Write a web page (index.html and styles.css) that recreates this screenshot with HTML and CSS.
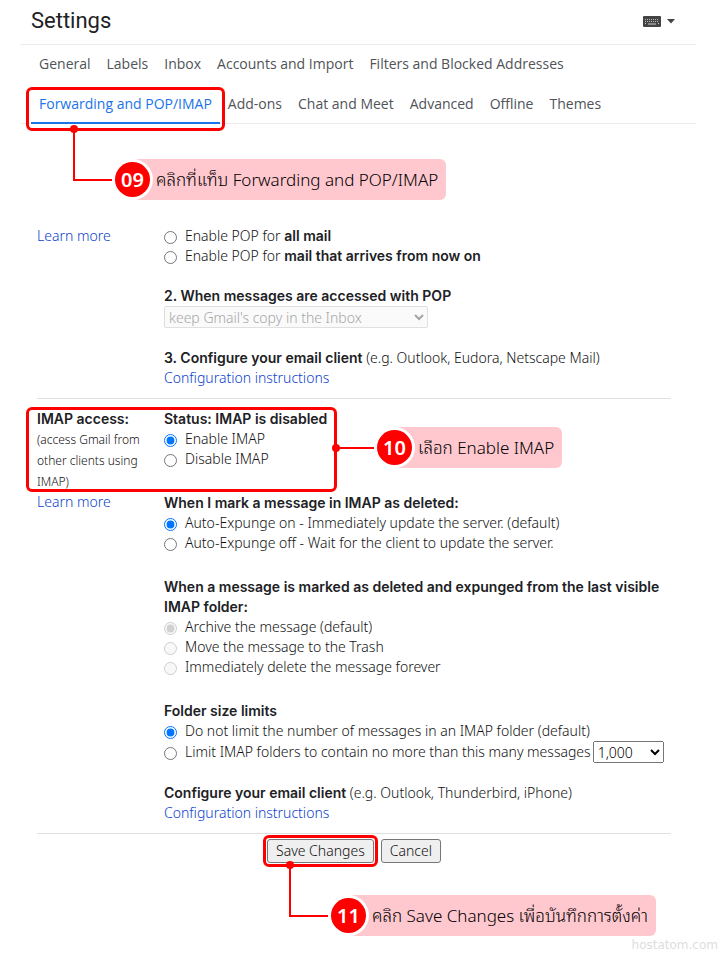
FILE: index.html
```html
<!DOCTYPE html>
<html lang="en">
<head>
    <meta charset="UTF-8">
    <meta name="viewport" content="width=device-width, initial-scale=1.0">
    <title>Settings</title>
    <link rel="stylesheet" href="styles.css">
</head>
<body>

    <header class="header">
        <h1>Settings</h1>
        <button class="input-tools" type="button" aria-label="Input tools">
            <svg width="18" height="11" viewBox="0 0 18 11">
                <rect width="18" height="11" rx="1" fill="#444"/>
                <path d="M2 3.5h14M2 5.5h14" stroke="#bbb" stroke-width="1" stroke-dasharray="1 1"/>
                <path d="M2 7.5h1M5 8h8M15 7.5h1" stroke="#ccc" stroke-width="1"/>
            </svg>
            <svg width="8" height="5" viewBox="0 0 8 5">
                <path d="M0 0h8L4 4.5z" fill="#444"/>
            </svg>
        </button>
    </header>

    <!-- Tabs -->
    <nav class="tabs">
        <a href="#">General</a>
        <a href="#">Labels</a>
        <a href="#">Inbox</a>
        <a href="#">Accounts and Import</a>
        <a href="#">Filters and Blocked Addresses</a>
        <div class="marked">
            <a href="#" class="active">Forwarding and POP/IMAP</a>
            <div class="highlight highlight-tab"></div>
            <div class="callout callout-tab" lang="th">
                <span class="connector elbow"></span>
                <span class="badge">09</span>
                <span class="note">คลิกที่แท็บ Forwarding and POP/IMAP</span>
            </div>
        </div>
        <a href="#">Add-ons</a>
        <a href="#">Chat and Meet</a>
        <a href="#">Advanced</a>
        <a href="#">Offline</a>
        <a href="#">Themes</a>
    </nav>

    <form class="settings">
        <!-- POP -->
        <section class="row">
            <div class="side">
                <a href="#">Learn more</a>
            </div>
            <div class="main">
                <div class="group">
                    <label class="option"><input type="radio" name="pop"><span>Enable POP for <b>all mail</b></span></label>
                    <label class="option"><input type="radio" name="pop"><span>Enable POP for <b>mail that arrives from now on</b></span></label>
                </div>
                <div class="group">
                    <label for="popAction"><b>2. When messages are accessed with POP</b></label>
                    <select id="popAction" class="pop-action" disabled>
                        <option>keep Gmail's copy in the Inbox</option>
                    </select>
                </div>
                <div class="group">
                    <p><b>3. Configure your email client</b> (e.g. Outlook, Eudora, Netscape Mail)</p>
                    <a href="#">Configuration instructions</a>
                </div>
            </div>
        </section>

        <!-- IMAP -->
        <section class="row">
            <div class="side">
                <h2>IMAP access:</h2>
                <p class="hint">(access Gmail from other clients using IMAP)</p>
                <a href="#">Learn more</a>
            </div>
            <div class="main imap">
                <div class="group">
                    <h2>Status: IMAP is disabled</h2>
                    <label class="option"><input type="radio" name="imap" checked><span>Enable IMAP</span></label>
                    <label class="option"><input type="radio" name="imap"><span>Disable IMAP</span></label>
                </div>
                <div class="group">
                    <h2>When I mark a message in IMAP as deleted:</h2>
                    <label class="option"><input type="radio" name="expunge" checked><span>Auto-Expunge on - Immediately update the server. (default)</span></label>
                    <label class="option"><input type="radio" name="expunge"><span>Auto-Expunge off - Wait for the client to update the server.</span></label>
                </div>
                <div class="group">
                    <h2>When a message is marked as deleted and expunged from the last visible IMAP folder:</h2>
                    <label class="option"><input type="radio" name="deleted" checked disabled><span>Archive the message (default)</span></label>
                    <label class="option"><input type="radio" name="deleted" disabled><span>Move the message to the Trash</span></label>
                    <label class="option"><input type="radio" name="deleted" disabled><span>Immediately delete the message forever</span></label>
                </div>
                <div class="group limits">
                    <h2>Folder size limits</h2>
                    <label class="option"><input type="radio" name="limit" checked><span>Do not limit the number of messages in an IMAP folder (default)</span></label>
                    <div class="limit-line">
                        <label class="option"><input type="radio" name="limit"><span>Limit IMAP folders to contain no more than this many messages</span></label>
                        <select class="limit-count" aria-label="Message limit">
                            <option>1,000</option>
                        </select>
                    </div>
                </div>
                <div class="group">
                    <p><b>Configure your email client</b> (e.g. Outlook, Thunderbird, iPhone)</p>
                    <a href="#">Configuration instructions</a>
                </div>
            </div>
            <div class="highlight highlight-imap"></div>
            <div class="callout callout-imap" lang="th">
                <span class="connector"></span>
                <span class="badge">10</span>
                <span class="note">เลือก Enable IMAP</span>
            </div>
        </section>

        <!-- Buttons -->
        <div class="actions">
            <div class="marked">
                <button type="button">Save Changes</button>
                <div class="highlight highlight-save"></div>
                <div class="callout callout-save" lang="th">
                    <span class="connector elbow"></span>
                    <span class="badge">11</span>
                    <span class="note">คลิก Save Changes เพื่อบันทึกการตั้งค่า</span>
                </div>
            </div>
            <button type="button">Cancel</button>
        </div>
    </form>

    <footer class="watermark">hostatom.com</footer>

</body>
</html>
```

FILE: styles.css
```css
* {
    box-sizing: border-box;
}
body {
    margin: 0;
    background: #fff;
    color: #111;
    font-family: "Noto Sans", sans-serif;
    font-size: 14px;
    font-weight: 300;
    line-height: 20px;
}
h1, h2, p {
    margin: 0;
}
h2 {
    font-size: 14px;
}
h2, b {
    color: #202124;
    font-family: Inter, sans-serif;
    font-weight: 600;
}
a {
    color: #0b41cd;
    text-decoration: none;
}
.header {
    display: flex;
    justify-content: space-between;
    height: 45px;
    margin: 0 24px 0 20px;
    padding: 0 21px 0 11px;
    border-bottom: 1px solid #ebebeb;
}
h1 {
    color: #202124;
    font-family: Roboto, sans-serif;
    font-size: 22px;
    font-weight: 400;
    line-height: 41px;
}
.input-tools {
    display: flex;
    align-items: center;
    gap: 6px;
    height: 43px;
    padding: 0;
    border: none;
    background: none;
}
.tabs {
    display: flex;
    flex-wrap: wrap;
    row-gap: 2px;
    margin: 0 24px 0 20px;
    padding-left: 11px;
    border-bottom: 1px solid #ebebeb;
}
.tabs a {
    display: block;
    height: 38px;
    padding: 0 8px;
    color: #505357;
    font-family: "Open Sans", sans-serif;
    font-weight: 500;
    line-height: 38px;
}
.tabs .active {
    height: 39px;
    margin-bottom: -1px;
    color: #1a73e8;
    border-bottom: 2px solid #1a73e8;
}
.marked {
    position: relative;
}

/* Settings rows */
.settings {
    margin: 0 49px 0 37px;
    padding-top: 92px;
}
.row {
    position: relative;
    display: grid;
    grid-template-columns: 127px 1fr;
    padding: 10px 0;
    border-bottom: 1px solid #e0e0e0;
}
.side {
    padding-right: 16px;
}
.hint {
    font-size: 12px;
    line-height: 21px;
}
.main {
    display: flex;
    flex-direction: column;
    gap: 20px;
}
.imap {
    gap: 24px;
}
.imap .limits {
    margin-bottom: -4px;
}
.group {
    display: flex;
    flex-direction: column;
    align-items: flex-start;
}
.option {
    display: flex;
    align-items: flex-start;
    gap: 8px;
}
.option input {
    flex: none;
    width: 13px;
    height: 13px;
    margin: 5px 0 0;
}
select {
    height: 22px;
    padding: 0;
    font: inherit;
}
.pop-action {
    width: 264px;
}
.limit-line {
    display: flex;
    align-items: center;
    gap: 2px;
    white-space: nowrap;
}
.limit-count {
    width: 71px;
}
.actions {
    display: flex;
    justify-content: center;
    gap: 7px;
    padding-top: 5px;
}
.actions button {
    display: block;
    height: 24px;
    padding: 0 8px;
    border: 1px solid #767676;
    border-radius: 3px;
    background: #efefef;
    color: #111;
    font: inherit;
}

/* Red marks and step notes */
.highlight {
    position: absolute;
    border: 3px solid #f00;
    border-radius: 6px;
    pointer-events: none;
}
.highlight-tab {
    inset: 2px -5px -8px;
}
.highlight-imap {
    top: 8px;
    left: -11px;
    width: 311px;
    height: 85px;
}
.highlight-save {
    inset: -4px;
}
.callout {
    position: absolute;
    display: flex;
    align-items: center;
    height: 41px;
    color: #000;
    white-space: nowrap;
}
.callout-tab {
    top: 74px;
    left: 42px;
}
.callout-imap {
    top: 28px;
    left: 298px;
}
.callout-save {
    top: 56px;
    left: 22px;
}
.connector {
    position: relative;
    width: 39px;
    height: 2px;
    margin-right: 3px;
    background: #f00;
}
.connector::before {
    content: "";
    position: absolute;
    left: -3px;
    top: -3px;
    width: 8px;
    height: 8px;
    border-radius: 50%;
    background: #f00;
}
.elbow::before {
    top: -54px;
}
.elbow::after {
    content: "";
    position: absolute;
    left: 0;
    bottom: 0;
    width: 2px;
    height: 50px;
    background: #f00;
}
.badge {
    z-index: 1;
    width: 35px;
    height: 35px;
    border-radius: 50%;
    background: #f00;
    box-shadow: 0 0 0 3px #fff;
    color: #fff;
    font-size: 20px;
    font-weight: 600;
    line-height: 35px;
    text-align: center;
}
.note {
    height: 41px;
    margin-left: -17px;
    padding: 0 8px 0 23px;
    border-radius: 6px;
    background: #ffc8cf;
    font-family: "Noto Sans", "Noto Sans Thai Looped", "Loma", sans-serif;
    font-size: 17px;
    line-height: 41px;
}
.watermark {
    padding: 75px 2px 0 0;
    color: #ddd;
    font-family: "DejaVu Sans", sans-serif;
    font-size: 12px;
    font-weight: 400;
    line-height: 15px;
    text-align: right;
}
```
